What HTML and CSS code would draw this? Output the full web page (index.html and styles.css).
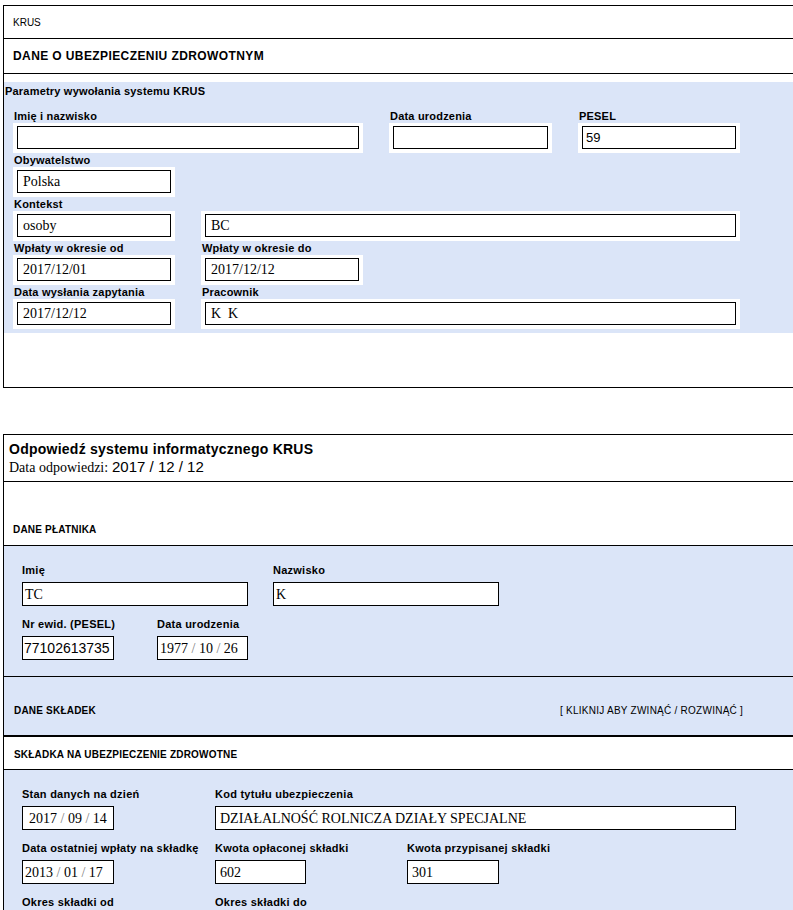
FILE: index.html
```html
<!DOCTYPE html>
<html lang="pl">
<head>
<meta charset="utf-8">
<title>KRUS – dane o ubezpieczeniu zdrowotnym</title>
<link rel="stylesheet" href="styles.css">
</head>
<body>
<div class="box box-query">
  <div class="row-krus">KRUS</div>
  <div class="row-title">DANE O UBEZPIECZENIU ZDROWOTNYM</div>
  <div class="params">
    <div class="params-title">Parametry wywołania systemu KRUS</div>
    <div class="qgrid">
      <div class="qf col1 span2"><div class="ql">Imię i nazwisko</div><div class="qw"><div class="qv"></div></div></div>
      <div class="qf col3"><div class="ql">Data urodzenia</div><div class="qw"><div class="qv"></div></div></div>
      <div class="qf col4"><div class="ql">PESEL</div><div class="qw"><div class="qv qv-sans">59</div></div></div>

      <div class="qf col1"><div class="ql">Obywatelstwo</div><div class="qw"><div class="qv">Polska</div></div></div>

      <div class="qf col1"><div class="ql">Kontekst</div><div class="qw"><div class="qv">osoby</div></div></div>
      <div class="qf col2 span3"><div class="ql">&nbsp;</div><div class="qw"><div class="qv">BC</div></div></div>

      <div class="qf col1"><div class="ql">Wpłaty w okresie od</div><div class="qw"><div class="qv">2017/12/01</div></div></div>
      <div class="qf col2"><div class="ql">Wpłaty w okresie do</div><div class="qw"><div class="qv">2017/12/12</div></div></div>

      <div class="qf col1"><div class="ql">Data wysłania zapytania</div><div class="qw"><div class="qv">2017/12/12</div></div></div>
      <div class="qf col2 span3"><div class="ql">Pracownik</div><div class="qw"><div class="qv">K&nbsp; K</div></div></div>
    </div>
  </div>
</div>

<div class="box box-response">
  <div class="resp-head">
    <div class="resp-title">Odpowiedź systemu informatycznego KRUS</div>
    <div class="resp-date"><span class="serif">Data odpowiedzi:</span> <span class="resp-date-val">2017 / 12 / 12</span></div>
  </div>

  <div class="sec-head sec-platnik">DANE PŁATNIKA</div>
  <div class="panel pgrid">
    <div class="pf c1 s2"><div class="pl">Imię</div><div class="pv w226">TC</div></div>
    <div class="pf c3"><div class="pl">Nazwisko</div><div class="pv w226">K</div></div>
    <div class="pf c1"><div class="pl">Nr ewid. (PESEL)</div><div class="pv pv-sans w92">77102613735</div></div>
    <div class="pf c2"><div class="pl">Data urodzenia</div><div class="pv w91">1977 <span class="sl">/</span> 10 <span class="sl">/</span> 26</div></div>
  </div>

  <div class="sec-toggle">
    <span class="sec-toggle-title">DANE SKŁADEK</span>
    <span class="toggle-link">[ KLIKNIJ ABY ZWINĄĆ / ROZWINĄĆ ]</span>
  </div>
  <div class="sec-head sec-skladka">SKŁADKA NA UBEZPIECZENIE ZDROWOTNE</div>
  <div class="panel sgrid">
    <div class="pf c1"><div class="pl">Stan danych na dzień</div><div class="pv w92 pad6">2017 <span class="sl">/</span> 09 <span class="sl">/</span> 14</div></div>
    <div class="pf c2 s3"><div class="pl">Kod tytułu ubezpieczenia</div><div class="pv pad4 w521">DZIAŁALNOŚĆ ROLNICZA DZIAŁY SPECJALNE</div></div>
    <div class="pf c1"><div class="pl">Data ostatniej wpłaty na składkę</div><div class="pv w92">2013 <span class="sl">/</span> 01 <span class="sl">/</span> 17</div></div>
    <div class="pf c2"><div class="pl">Kwota opłaconej składki</div><div class="pv pad4 w91">602</div></div>
    <div class="pf c3"><div class="pl">Kwota przypisanej składki</div><div class="pv pad4 w92">301</div></div>
    <div class="pf c1"><div class="pl">Okres składki od</div><div class="pv w92"></div></div>
    <div class="pf c2"><div class="pl">Okres składki do</div><div class="pv w91"></div></div>
  </div>
</div>
</body>
</html>
```

FILE: styles.css
```css
* { box-sizing: border-box; }

html, body {
  margin: 0;
  padding: 0;
  background: #ffffff;
}

body {
  font-family: "Liberation Sans", Arial, sans-serif;
  font-size: 11px;
  color: #000;
}

.box {
  margin-left: 3px;
  border: 1px solid #000;
  border-right: none;
}

.box-query {
  margin-top: 5px;
  padding-bottom: 54px;
}

.box-response {
  margin-top: 46px;
  border-bottom: none;
}

/* ---------- query box ---------- */
.row-krus {
  height: 33px;
  display: flex;
  align-items: center;
  padding-left: 9px;
  font-size: 10px;
  border-bottom: 1px solid #000;
}

.row-title {
  height: 35px;
  display: flex;
  align-items: center;
  padding-left: 9px;
  font-size: 12px;
  font-weight: bold;
  letter-spacing: 0.4px;
  border-bottom: 1px solid #000;
}

.params {
  margin-top: 8px;
  background: #dbe5f8;
  padding: 2px 0 4px 0;
}

.params-title {
  font-weight: bold;
  line-height: 14px;
  padding-left: 1px;
  letter-spacing: 0.2px;
}

.qgrid {
  display: grid;
  grid-template-columns: 162px 162px 163px 162px;
  column-gap: 26px;
  margin: 11px 0 0 9px;
}

.col1 { grid-column-start: 1; }
.col2 { grid-column-start: 2; }
.col3 { grid-column-start: 3; }
.col4 { grid-column-start: 4; }
.span2 { grid-column-end: span 2; }
.span3 { grid-column-end: span 3; }

.ql {
  font-weight: bold;
  line-height: 14px;
  padding-left: 1px;
  letter-spacing: 0.2px;
  white-space: nowrap;
}

.qw {
  background: #fff;
  padding: 3px 4px 4px 4px;
}

.qv {
  height: 23px;
  border: 1px solid #000;
  background: #fff;
  font-family: "Liberation Serif", "Times New Roman", serif;
  font-size: 14px;
  line-height: 21px;
  padding-left: 5px;
  white-space: nowrap;
  overflow: hidden;
}

.qv-sans {
  font-family: "Liberation Sans", Arial, sans-serif;
  font-size: 13px;
  padding-left: 3px;
}

/* ---------- response box ---------- */
.resp-head {
  padding: 5px 0 4px 5px;
  line-height: 18px;
  border-bottom: 1px solid #000;
}

.resp-title {
  font-size: 14px;
  font-weight: bold;
  letter-spacing: 0.25px;
}

.resp-date {
  font-size: 14px;
}

.serif {
  font-family: "Liberation Serif", "Times New Roman", serif;
  font-size: 14px;
}

.resp-date-val {
  font-size: 15px;
}

.sec-head {
  font-size: 10px;
  font-weight: bold;
  line-height: 14px;
  letter-spacing: 0.2px;
  border-bottom: 1px solid #000;
}

.sec-platnik {
  padding: 41px 0 8px 9px;
}

.sec-skladka {
  padding: 11px 0 7px 10px;
}

.sec-toggle {
  display: flex;
  background: #dbe5f8;
  padding: 27px 0 17px 10px;
  line-height: 14px;
  font-size: 10px;
  border-bottom: 2px solid #000;
}

.sec-toggle-title {
  font-weight: bold;
  letter-spacing: 0.2px;
  width: 546px;
  flex: none;
}

.toggle-link {
  cursor: pointer;
  letter-spacing: 0.25px;
  white-space: nowrap;
}

.panel {
  background: #dbe5f8;
  padding: 17px 0 16px 18px;
  display: grid;
  row-gap: 11px;
}

.panel.pgrid {
  grid-template-columns: 135px 116px 226px 1fr;
  border-bottom: 1px solid #000;
}

.panel.sgrid {
  grid-template-columns: 193px 192px 193px 1fr;
  padding-top: 17px;
  padding-bottom: 40px;
}

.c1 { grid-column-start: 1; }
.c2 { grid-column-start: 2; }
.c3 { grid-column-start: 3; }
.s2 { grid-column-end: span 2; }
.s3 { grid-column-end: span 3; }

.pl {
  font-weight: bold;
  line-height: 14px;
  margin-bottom: 5px;
  letter-spacing: 0.25px;
  white-space: nowrap;
}

.pv {
  height: 24px;
  border: 1px solid #000;
  background: #fff;
  font-family: "Liberation Serif", "Times New Roman", serif;
  font-size: 14px;
  line-height: 21px;
  padding: 1px 0 0 2px;
  white-space: nowrap;
  overflow: hidden;
}

.pv-sans {
  font-family: "Liberation Sans", Arial, sans-serif;
  padding-left: 1px;
}

.pad4 { padding-left: 4px; }
.pad6 { padding-left: 6px; }

.w91 { width: 91px; }
.w92 { width: 92px; }
.w226 { width: 226px; }
.w521 { width: 521px; }

.sl { color: #808080; }
```
